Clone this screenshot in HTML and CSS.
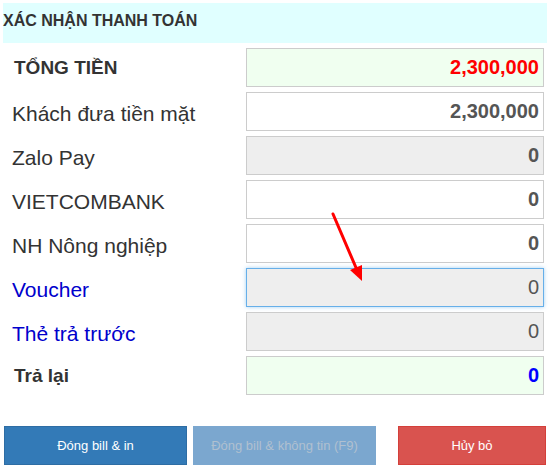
FILE: index.html
```html
<!DOCTYPE html>
<html lang="vi">
<head>
<meta charset="utf-8">
<title>Xác nhận thanh toán</title>
<link rel="stylesheet" href="styles.css">
</head>
<body>
<div class="panel">
  <div class="header">XÁC NHẬN THANH TOÁN</div>
  <div class="rows">
    <div class="row">
      <div class="label strong">TỔNG TIỀN</div>
      <div class="field green red-text">2,300,000</div>
    </div>
    <div class="row">
      <div class="label">Khách đưa tiền mặt</div>
      <div class="field">2,300,000</div>
    </div>
    <div class="row">
      <div class="label">Zalo Pay</div>
      <div class="field gray">0</div>
    </div>
    <div class="row">
      <div class="label">VIETCOMBANK</div>
      <div class="field">0</div>
    </div>
    <div class="row">
      <div class="label">NH Nông nghiệp</div>
      <div class="field">0</div>
    </div>
    <div class="row">
      <div class="label blue">Voucher</div>
      <div class="field gray light focus">0</div>
    </div>
    <div class="row">
      <div class="label blue">Thẻ trả trước</div>
      <div class="field gray light">0</div>
    </div>
    <div class="row">
      <div class="label strong">Trả lại</div>
      <div class="field green blue-text">0</div>
    </div>
  </div>
  <div class="actions">
    <button class="btn primary">Đóng bill &amp; in</button>
    <button class="btn primary disabled">Đóng bill &amp; không tin (F9)</button>
    <button class="btn danger">Hủy bỏ</button>
  </div>
  <svg class="arrow" width="60" height="90" viewBox="0 0 60 90">
    <line x1="4" y1="4" x2="28" y2="60" stroke="#ff0000" stroke-width="3" stroke-linecap="round"/>
    <polygon points="33,71 21,60 33,55" fill="#ff0000"/>
  </svg>
</div>
</body>
</html>
```
FILE: styles.css
```css
html, body {
  margin: 0;
  padding: 0;
  background: #ffffff;
}
body {
  font-family: "Liberation Sans", Arial, sans-serif;
  color: #333333;
}
.panel {
  position: relative;
  padding: 3px;
  width: 544px;
}
.header {
  height: 40px;
  background: #e0ffff;
  font-size: 16px;
  font-weight: bold;
  line-height: 36px;
  color: #333333;
}
.rows {
  margin-top: 5px;
  display: flex;
  flex-direction: column;
  gap: 5px;
}
.row {
  display: grid;
  grid-template-columns: 243px 298px;
  height: 39px;
  align-items: center;
}
.label {
  padding-left: 9px;
  padding-top: 5px;
  font-size: 21px;
  color: #333333;
}
.label.strong {
  font-weight: bold;
  padding-left: 11px;
  padding-top: 1px;
  font-size: 19px;
}
.label.blue {
  color: #0000cc;
}
.field {
  box-sizing: border-box;
  height: 39px;
  border: 1px solid #cccccc;
  background: #ffffff;
  text-align: right;
  padding-right: 4px;
  font-size: 20px;
  font-weight: bold;
  line-height: 37px;
  color: #555555;
}
.field.green {
  background: #f0fff0;
}
.field.gray {
  background: #eeeeee;
}
.field.light {
  font-weight: normal;
}
.field.focus {
  border-color: #66afe9;
  box-shadow: 0 0 4px rgba(102, 175, 233, 0.6);
}
.field.green.red-text {
  color: #ff0000;
}
.field.green.blue-text {
  color: #0000ff;
}
.actions {
  margin-top: 31px;
  display: flex;
  padding-left: 1px;
}
.btn {
  height: 39px;
  border: 1px solid #2e6da4;
  font-family: "Liberation Sans", Arial, sans-serif;
  font-size: 13px;
  color: #ffffff;
  padding: 0;
  cursor: pointer;
}
.btn.primary {
  background: #337ab7;
  width: 183px;
  margin-right: 6px;
}
.btn.primary.disabled {
  background: #7ba7cf;
  border-color: #7ba7cf;
  color: #b0c0d0;
  margin-right: 22px;
}
.btn.danger {
  background: #d9534f;
  border-color: #d43f3a;
  width: 148px;
}
.arrow {
  position: absolute;
  left: 329px;
  top: 210px;
}
```
